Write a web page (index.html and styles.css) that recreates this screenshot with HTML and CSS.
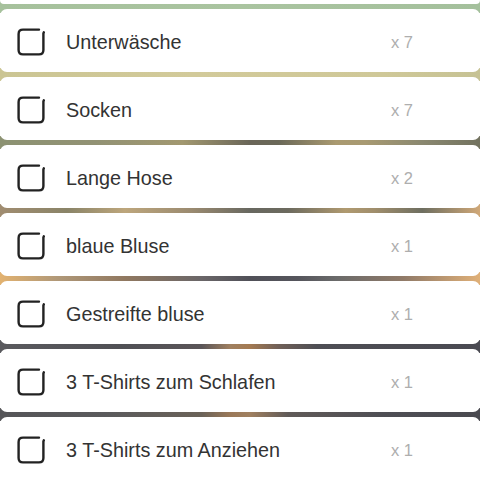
FILE: index.html
```html
<!DOCTYPE html>
<html lang="de">
<head>
<meta charset="utf-8">
<title>Packliste</title>
<link rel="stylesheet" href="styles.css">
</head>
<body>
<div class="list">
  <div class="card card-partial"></div>
  <div class="sep sep-0"></div>
  <div class="card">
    <svg class="check" viewBox="0 0 28 28"><path d="M22 1.6 H6 Q1.6 1.6 1.6 6 V22 Q1.6 26.4 6 26.4 H22 Q26.4 26.4 26.4 22 V5.5 L26.8 4.3"/></svg>
    <span class="name">Unterwäsche</span>
    <span class="qty">x 7</span>
  </div>
  <div class="sep sep-1"></div>
  <div class="card">
    <svg class="check" viewBox="0 0 28 28"><path d="M22 1.6 H6 Q1.6 1.6 1.6 6 V22 Q1.6 26.4 6 26.4 H22 Q26.4 26.4 26.4 22 V5.5 L26.8 4.3"/></svg>
    <span class="name">Socken</span>
    <span class="qty">x 7</span>
  </div>
  <div class="sep sep-2"></div>
  <div class="card">
    <svg class="check" viewBox="0 0 28 28"><path d="M22 1.6 H6 Q1.6 1.6 1.6 6 V22 Q1.6 26.4 6 26.4 H22 Q26.4 26.4 26.4 22 V5.5 L26.8 4.3"/></svg>
    <span class="name">Lange Hose</span>
    <span class="qty">x 2</span>
  </div>
  <div class="sep sep-3"></div>
  <div class="card">
    <svg class="check" viewBox="0 0 28 28"><path d="M22 1.6 H6 Q1.6 1.6 1.6 6 V22 Q1.6 26.4 6 26.4 H22 Q26.4 26.4 26.4 22 V5.5 L26.8 4.3"/></svg>
    <span class="name">blaue Bluse</span>
    <span class="qty">x 1</span>
  </div>
  <div class="sep sep-4"></div>
  <div class="card">
    <svg class="check" viewBox="0 0 28 28"><path d="M22 1.6 H6 Q1.6 1.6 1.6 6 V22 Q1.6 26.4 6 26.4 H22 Q26.4 26.4 26.4 22 V5.5 L26.8 4.3"/></svg>
    <span class="name">Gestreifte bluse</span>
    <span class="qty">x 1</span>
  </div>
  <div class="sep sep-5"></div>
  <div class="card">
    <svg class="check" viewBox="0 0 28 28"><path d="M22 1.6 H6 Q1.6 1.6 1.6 6 V22 Q1.6 26.4 6 26.4 H22 Q26.4 26.4 26.4 22 V5.5 L26.8 4.3"/></svg>
    <span class="name">3 T-Shirts zum Schlafen</span>
    <span class="qty">x 1</span>
  </div>
  <div class="sep sep-6"></div>
  <div class="card">
    <svg class="check" viewBox="0 0 28 28"><path d="M22 1.6 H6 Q1.6 1.6 1.6 6 V22 Q1.6 26.4 6 26.4 H22 Q26.4 26.4 26.4 22 V5.5 L26.8 4.3"/></svg>
    <span class="name">3 T-Shirts zum Anziehen</span>
    <span class="qty">x 1</span>
  </div>
</div>
</body>
</html>
```
FILE: styles.css
```css
html, body {
  margin: 0;
  padding: 0;
  background: #ffffff;
  overflow: hidden;
}

.list {
  display: flex;
  flex-direction: column;
  width: 480px;
  font-family: "Liberation Sans", Arial, sans-serif;
}

.card {
  position: relative;
  z-index: 1;
  height: 63px;
  background: #ffffff;
  border-radius: 7px;
  display: flex;
  align-items: center;
  padding: 3px 29px 0 17px;
  box-sizing: border-box;
  flex: none;
}

.card-partial {
  height: 4px;
  padding: 0;
  border-radius: 0 0 7px 7px;
}

.sep {
  height: 13px;
  margin: -4px 0;
  flex: none;
}

.check {
  width: 28px;
  height: 28px;
  flex: none;
  fill: none;
  stroke: #222222;
  stroke-width: 2.4;
  stroke-linecap: round;
  stroke-linejoin: round;
}

.name {
  flex: 1;
  margin-left: 21px;
  font-size: 19.8px;
  color: #333333;
  white-space: nowrap;
}

.qty {
  width: 60px;
  flex: none;
  font-size: 16.5px;
  color: #aeaeae;
}

.sep-0 { background: linear-gradient(to right, #a6c19c, #aac4a0 50%, #a4c09c); }
.sep-1 { background: linear-gradient(to right, #cbc593, #d2ca9a 40%, #cfc898 80%, #c6c294); }
.sep-2 { background: linear-gradient(to right, #8c9272, #929274 20%, #a29870 38%, #6a6658 52%, #6a6858 58%, #aa9a70 70%, #a89a72 76%, #8a8870 88%, #72725f); }
.sep-3 { background: linear-gradient(to right, #a08c70, #8a8468 14%, #bda67c 26%, #9a8a70 40%, #686860 52%, #6c6a5e 60%, #b09a70 72%, #a08e6c 78%, #6e6e60 88%, #d0a878); }
.sep-4 { background: linear-gradient(to right, #e2b270, #b09878 12%, #907860 26%, #6a6668 42%, #505058 52%, #55555c 62%, #6a6a6a 70%, #907a68 84%, #e0b078); }
.sep-5 { background: linear-gradient(to right, #5a5a5e, #505055 25%, #5a5558 42%, #a08060 48%, #a47a52 52%, #706058 58%, #4e4e54 66%, #4a4a52); }
.sep-6 { background: linear-gradient(to right, #555558, #5a5a5c 22%, #6a6258 42%, #9a7858 48%, #a08060 52%, #605a58 60%, #4e4e54 80%, #4a4a50); }
```
